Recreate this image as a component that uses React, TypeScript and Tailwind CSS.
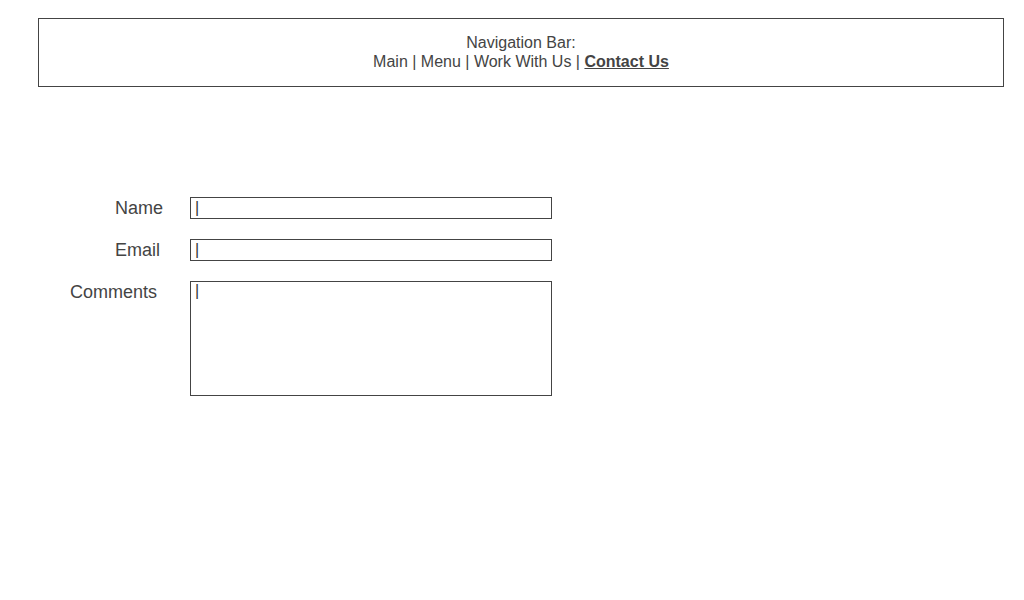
import React from 'react';

const App = () => {
  const fields = [
    { label: 'Name', pad: 'pl-[115px]' },
    { label: 'Email', pad: 'pl-[115px]' },
  ];

  return (
    <div className="w-[1024px] h-[600px] bg-white text-[#444] font-['Liberation_Sans',Arial,sans-serif]">
      <div className="pt-[18px] pl-[38px] pr-[20px]">
        <nav className="border border-[#444] h-[69px] pb-[2px] flex flex-col items-center justify-center text-base leading-[19px]">
          <div>Navigation Bar:</div>
          <div>
            Main | Menu | Work With Us | <a className="font-bold underline">Contact Us</a>
          </div>
        </nav>
      </div>

      <form className="mt-[110px] flex flex-col gap-[20px]">
        {fields.map((f) => (
          <div key={f.label} className="flex items-center h-[22px]">
            <label className={`${f.pad} w-[190px] text-lg`}>{f.label}</label>
            <input
              readOnly
              value="|"
              className="w-[362px] h-[22px] border border-[#444] px-[4px] text-base text-[#333] outline-none"
            />
          </div>
        ))}
        <div className="flex items-start">
          <label className="pl-[70px] w-[190px] text-lg leading-[22px]">Comments</label>
          <textarea
            readOnly
            value="|"
            className="w-[362px] h-[115px] border border-[#444] px-[4px] py-0 text-base leading-[18px] text-[#333] outline-none resize-none"
          />
        </div>
      </form>
    </div>
  );
};

export default App;
